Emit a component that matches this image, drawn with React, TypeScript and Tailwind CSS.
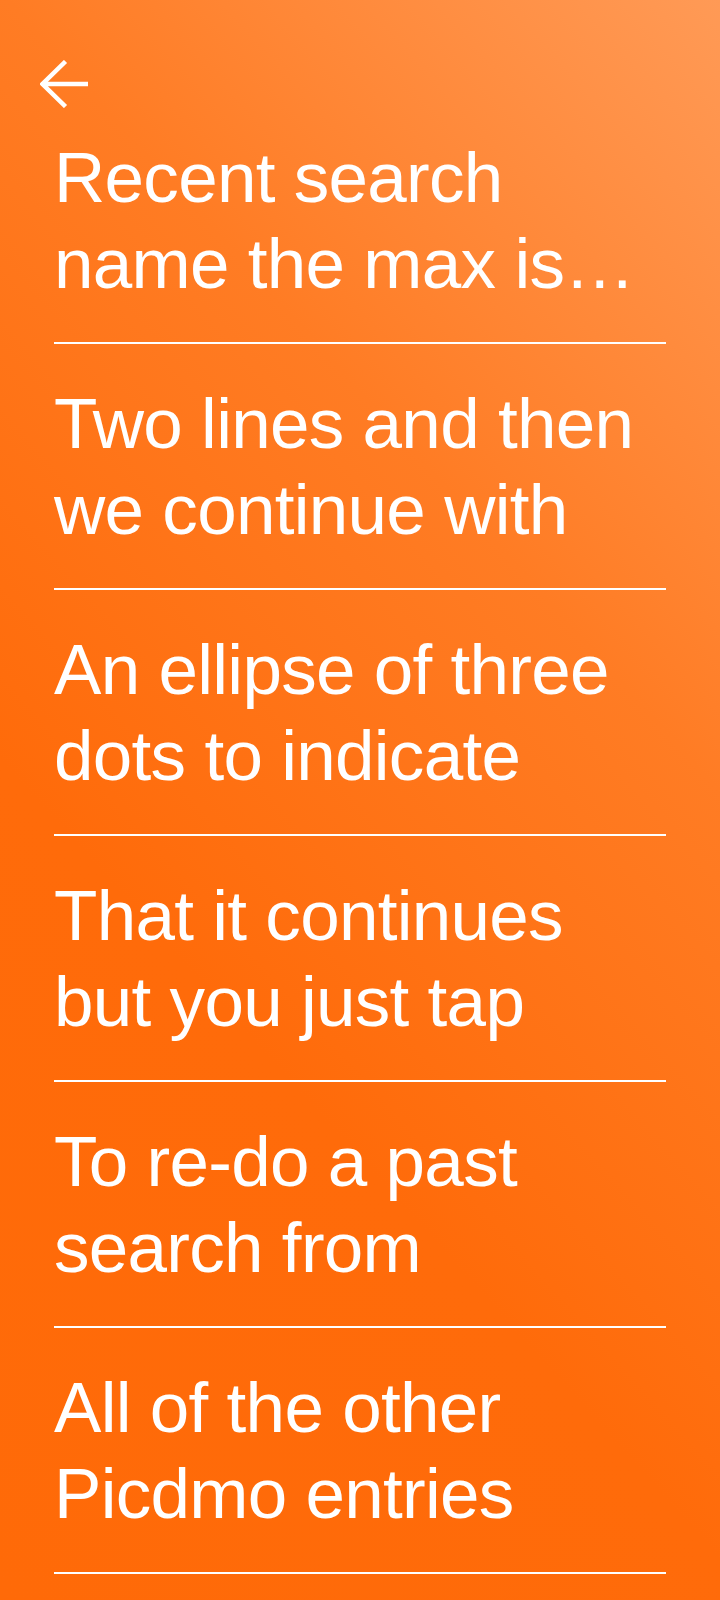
const searches = [
  ["Recent search", "name the max is…"],
  ["Two lines and then", "we continue with"],
  ["An ellipse of three", "dots to indicate"],
  ["That it continues", "but you just tap"],
  ["To re-do a past", "search from"],
  ["All of the other", "Picdmo entries"],
];

const BackArrow = () => (
  <svg width="48" height="48" viewBox="0 0 48 48" fill="none" className="block">
    <path
      d="M25.5 1.5 L2.5 24 L25.5 46.5 M2.5 24 H48"
      stroke="white"
      strokeWidth="4.5"
      strokeLinejoin="miter"
      strokeLinecap="butt"
    />
  </svg>
);

export default function App() {
  return (
    <div
      className="min-h-[1600px] w-full bg-[linear-gradient(48deg,#ff6a08_0%,#ff6b0a_35%,#ff7c24_67%,#ff9a56_100%)] text-white"
      style={{ fontFamily: '"Liberation Sans", Arial, sans-serif' }}
    >
      {/* back button */}
      <div className="pt-[60px] pl-[40px]">
        <button className="block">
          <BackArrow />
        </button>
      </div>

      {/* recent searches */}
      <div className="px-[54px]">
        {searches.map((lines, i) => (
          <div
            key={i}
            className={
              (i === 0 ? "pt-[27px] " : "pt-[37px] ") +
              "pb-[35px] border-b-2 border-white text-[71px] leading-[86px] tracking-[-0.01em]"
            }
          >
            {lines.map((line) => (
              <div key={line} className="whitespace-nowrap">
                {line}
              </div>
            ))}
          </div>
        ))}
      </div>
    </div>
  );
}
